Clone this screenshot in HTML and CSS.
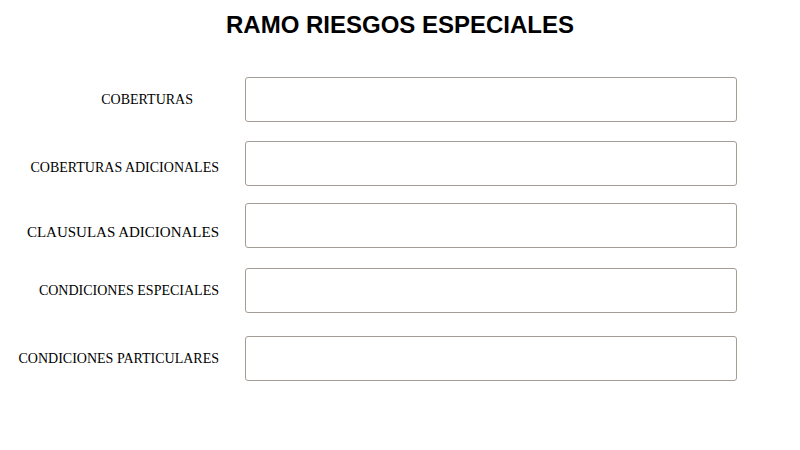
FILE: index.html
```html
<!DOCTYPE html>
<html>
<head>
<meta charset="utf-8">
<link rel="stylesheet" href="styles.css">
</head>
<body>
<h1 class="title">RAMO RIESGOS ESPECIALES</h1>
<form class="form">
  <div class="row r1">
    <label class="label l1">COBERTURAS</label>
    <input class="field" type="text">
  </div>
  <div class="row r2">
    <label class="label l2">COBERTURAS ADICIONALES</label>
    <input class="field" type="text">
  </div>
  <div class="row r3">
    <label class="label l3">CLAUSULAS ADICIONALES</label>
    <input class="field" type="text">
  </div>
  <div class="row r4">
    <label class="label">CONDICIONES ESPECIALES</label>
    <input class="field" type="text">
  </div>
  <div class="row r5">
    <label class="label">CONDICIONES PARTICULARES</label>
    <input class="field" type="text">
  </div>
</form>
</body>
</html>
```
FILE: styles.css
```css
html, body {
  margin: 0;
  padding: 0;
  background: #fff;
}
.title {
  margin: 10px 0 0 0;
  font-family: "Liberation Sans", Arial, sans-serif;
  font-weight: bold;
  font-size: 24px;
  line-height: 30px;
  text-align: center;
  color: #000;
}
.form {
  display: flex;
  flex-direction: column;
  margin-top: 37px;
}
.row {
  display: grid;
  grid-template-columns: 219px 492px;
  column-gap: 26px;
  align-items: center;
  height: 45px;
}
.r2 { margin-top: 19px; }
.r3 { margin-top: 17px; }
.r4 { margin-top: 20px; }
.r5 { margin-top: 23px; }
.label {
  font-family: "Liberation Serif", "Times New Roman", serif;
  font-size: 14px;
  color: #000;
  text-align: right;
}
.l1 { padding-right: 26px; }
.l2 { padding-top: 8px; }
.l3 { padding-top: 13px; font-size: 15px; }
.field {
  box-sizing: border-box;
  height: 45px;
  width: 492px;
  border: 1px solid #a39d95;
  border-radius: 3px;
  background: #fff;
  margin: 0;
  padding: 0 8px;
}
```
